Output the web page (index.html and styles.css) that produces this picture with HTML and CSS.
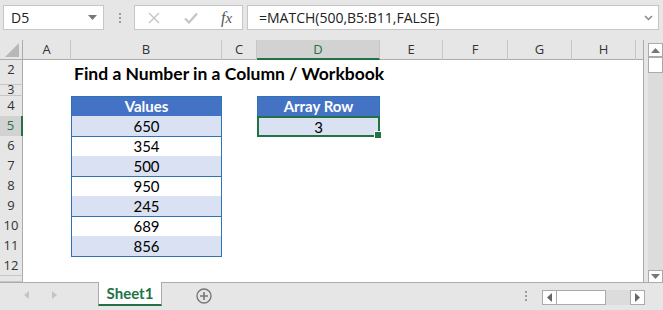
FILE: index.html
```html
<!DOCTYPE html>
<html lang="en">
<head>
    <meta charset="UTF-8">
    <meta name="viewport" content="width=device-width, initial-scale=1.0">
    <title>Find a Number in a Column / Workbook</title>
    <link rel="stylesheet" href="styles.css">
</head>
<body>
<div class="app">
    <!-- Barra de fórmulas -->
    <div class="toolbar">
        <div class="namebox">
            <span>D5</span>
            <svg class="caret" width="9" height="5" viewBox="0 0 9 5"><path d="M0 0h9L4.5 5z" fill="#777"/></svg>
        </div>
        <div class="grip"><i></i><i></i><i></i></div>
        <div class="fxbox">
            <svg width="12" height="12" viewBox="0 0 12 12"><path d="M1 1l10 10M11 1L1 11" stroke="#c4c4c4" stroke-width="1.4"/></svg>
            <svg width="14" height="12" viewBox="0 0 14 12"><path d="M1 6.5l4 4L13 1.5" stroke="#c4c4c4" stroke-width="2.2" fill="none"/></svg>
            <span class="fx"><i>f</i>x</span>
        </div>
        <div class="formula">
            <span>=MATCH(500,B5:B11,FALSE)</span>
            <svg width="9" height="6" viewBox="0 0 9 6"><path d="M1 1l3.5 3.5L8 1" stroke="#888" stroke-width="1.5" fill="none"/></svg>
        </div>
    </div>

    <div class="main">
        <div class="grid">
            <div class="row colhead">
                <div class="corner"><svg width="14" height="14" viewBox="0 0 14 14"><path d="M14 0v14H0z" fill="#b8b8b8"/></svg></div>
                <div class="ch">A</div><div class="ch">B</div><div class="ch">C</div>
                <div class="ch sel">D</div><div class="ch">E</div><div class="ch">F</div>
                <div class="ch">G</div><div class="ch">H</div><div class="ch last"></div>
            </div>
            <div class="row r-title">
                <div class="rh">2</div><div></div>
                <div class="title">Find a Number in a Column / Workbook</div>
                <div></div><div></div><div></div><div></div><div></div><div></div><div></div>
            </div>
            <div class="row r-thin">
                <div class="rh"><span>3</span></div><div></div><div></div><div></div><div></div><div></div><div></div><div></div><div></div><div></div>
            </div>
            <div class="row">
                <div class="rh">4</div><div></div>
                <div class="tc th">Values</div><div></div>
                <div class="tc th">Array Row</div>
                <div></div><div></div><div></div><div></div><div></div>
            </div>
            <div class="row">
                <div class="rh sel">5</div><div></div>
                <div class="tc alt">650</div><div></div>
                <div class="tc alt active">3</div>
                <div></div><div></div><div></div><div></div><div></div>
            </div>
            <div class="row">
                <div class="rh">6</div><div></div><div class="tc">354</div>
                <div></div><div></div><div></div><div></div><div></div><div></div><div></div>
            </div>
            <div class="row">
                <div class="rh">7</div><div></div><div class="tc alt">500</div>
                <div></div><div></div><div></div><div></div><div></div><div></div><div></div>
            </div>
            <div class="row">
                <div class="rh">8</div><div></div><div class="tc">950</div>
                <div></div><div></div><div></div><div></div><div></div><div></div><div></div>
            </div>
            <div class="row">
                <div class="rh">9</div><div></div><div class="tc alt">245</div>
                <div></div><div></div><div></div><div></div><div></div><div></div><div></div>
            </div>
            <div class="row">
                <div class="rh">10</div><div></div><div class="tc">689</div>
                <div></div><div></div><div></div><div></div><div></div><div></div><div></div>
            </div>
            <div class="row">
                <div class="rh">11</div><div></div><div class="tc alt">856</div>
                <div></div><div></div><div></div><div></div><div></div><div></div><div></div>
            </div>
            <div class="row">
                <div class="rh">12</div><div></div><div></div><div></div><div></div><div></div><div></div><div></div><div></div><div></div>
            </div>
            <div class="row r-cut">
                <div class="rh"></div><div></div><div></div><div></div><div></div><div></div><div></div><div></div><div></div><div></div>
            </div>
        </div>

        <!-- Barra de desplazamiento vertical -->
        <div class="vscroll">
            <div class="sbtn"><svg width="9" height="5" viewBox="0 0 9 5"><path d="M4.5 0L9 5H0z" fill="#777"/></svg></div>
            <div class="vthumb"></div>
            <div class="vtrack"></div>
            <div class="sbtn down"><svg width="9" height="5" viewBox="0 0 9 5"><path d="M0 0h9L4.5 5z" fill="#777"/></svg></div>
        </div>
    </div>

    <!-- Pestañas de hojas -->
    <div class="tabbar">
        <div class="navs">
            <svg width="5" height="8" viewBox="0 0 5 8"><path d="M5 0v8L0 4z" fill="#c4c4c4"/></svg>
            <svg width="5" height="8" viewBox="0 0 5 8"><path d="M0 0v8l5-4z" fill="#c4c4c4"/></svg>
        </div>
        <div class="tab">Sheet1</div>
        <svg class="add" width="16" height="16" viewBox="0 0 16 16">
            <circle cx="8" cy="8" r="7" stroke="#777" stroke-width="1.4" fill="none"/>
            <path d="M8 4v8M4 8h8" stroke="#777" stroke-width="1.6"/>
        </svg>
        <div class="spacer"></div>
        <div class="grip small"><i></i><i></i><i></i></div>
        <div class="hscroll">
            <div class="hbtn"><svg width="5" height="9" viewBox="0 0 5 9"><path d="M5 0v9L0 4.5z" fill="#666"/></svg></div>
            <div class="hthumb"></div>
            <div class="htrack"></div>
            <div class="hbtn"><svg width="5" height="9" viewBox="0 0 5 9"><path d="M0 0v9l5-4.5z" fill="#666"/></svg></div>
        </div>
    </div>
</div>
</body>
</html>
```

FILE: styles.css
```css
/* Reset */
* {
    margin: 0;
    padding: 0;
    box-sizing: border-box;
}

body {
    font-family: 'Open Sans', 'Liberation Sans', sans-serif;
    background: #e6e6e6;
    color: #222;
    overflow: hidden;
}

.app {
    width: 663px;
    height: 310px;
    display: flex;
    flex-direction: column;
}

/* Barra de fórmulas */
.toolbar {
    height: 40px;
    display: flex;
    align-items: flex-start;
    padding: 5px 3px 0 3px;
}

.namebox {
    width: 101px;
    height: 25px;
    background: #fff;
    border: 1px solid #c6c6c6;
    display: flex;
    align-items: center;
    justify-content: space-between;
    padding: 0 6px 0 7px;
    font-size: 14px;
    color: #222;
}

.grip {
    width: 2px;
    margin: 0 13px 0 15px;
    height: 25px;
    display: flex;
    flex-direction: column;
    justify-content: center;
    gap: 2px;
}

.grip i {
    display: block;
    width: 2px;
    height: 2px;
    background: #9d9d9d;
}

.fxbox {
    width: 109px;
    height: 25px;
    background: #fff;
    border: 1px solid #c6c6c6;
    display: flex;
    align-items: center;
    padding: 0 0 0 13px;
    gap: 24px;
}

.fx {
    font-family: 'Liberation Serif', serif;
    font-style: italic;
    font-size: 15px;
    color: #555;
    margin-left: -1px;
}

.fx i {
    font-size: 16px;
}

.formula {
    width: 412px;
    height: 25px;
    margin-left: 4px;
    background: #fff;
    border: 1px solid #c6c6c6;
    display: flex;
    align-items: center;
    justify-content: space-between;
    padding: 0 5px 0 11px;
    font-size: 14px;
    color: #222;
}

/* Hoja */
.main {
    height: 243px;
    display: flex;
    border-bottom: 1px solid #ababab;
}

.grid {
    width: 644px;
    background: #fff;
    border-right: 1px solid #ababab;
    overflow: hidden;
}

.row {
    display: grid;
    grid-template-columns: 23px 48px 151px 35px 123px 63px 65px 64px 64px 1fr;
    height: 20px;
}

.colhead {
    height: 20px;
    background: #e6e6e6;
    border-bottom: 1px solid #ababab;
}

.r-title { height: 25px; }
.r-thin { height: 11px; }
.r-cut { height: 6px; }

.corner {
    display: flex;
    align-items: flex-end;
    justify-content: flex-end;
    padding: 0 3px 3px 0;
    border-right: 1px solid #ababab;
}

.ch {
    border-right: 1px solid #c6c6c6;
    text-align: center;
    font-size: 13px;
    line-height: 19px;
    color: #333;
}

.ch.sel {
    background: #d2d2d2;
    border-bottom: 2px solid #217346;
    color: #217346;
    height: 20px;
}

.ch.last {
    border-right: none;
}

.rh {
    background: #e6e6e6;
    border-right: 1px solid #ababab;
    border-bottom: 1px solid #c6c6c6;
    text-align: center;
    font-size: 13px;
    line-height: 19px;
    color: #333;
    overflow: hidden;
}

.r-thin .rh {
    line-height: 10px;
    font-size: 12px;
}

.r-thin .rh span {
    display: block;
    height: 10px;
    overflow: hidden;
}

.rh.sel {
    background: #d2d2d2;
    border-right: 2px solid #217346;
    color: #217346;
}

/* Título */
.title {
    font-family: 'Lato', sans-serif;
    font-weight: bold;
    font-size: 17.5px;
    color: #000;
    white-space: nowrap;
    padding: 3px 0 0 3px;
}

/* Tablas */
.tc {
    border: 1px solid #2e75b6;
    border-top: none;
    text-align: center;
    font-family: 'Lato', sans-serif;
    font-size: 15px;
    line-height: 20px;
    color: #000;
}

.tc.th {
    background: #4472c4;
    border-top: 1px solid #2e75b6;
    color: #fff;
    font-weight: bold;
    line-height: 19px;
}

.tc.alt {
    background: #d9e1f2;
}

.tc.active {
    position: relative;
    border: 2px solid #217346;
    line-height: 18px;
    height: 21px;
}

.tc.active::after {
    content: "";
    position: absolute;
    right: -4px;
    bottom: -4px;
    width: 6px;
    height: 6px;
    background: #217346;
    border: 1px solid #fff;
}

/* Barra vertical */
.vscroll {
    width: 15px;
    margin-left: 4px;
    padding-top: 3px;
    display: flex;
    flex-direction: column;
    gap: 3px;
}

.sbtn {
    height: 14px;
    background: #fff;
    border: 1px solid #ababab;
    display: flex;
    align-items: center;
    justify-content: center;
}

.sbtn.down {
    border-bottom: none;
    height: 12px;
}

.vthumb {
    height: 16px;
    background: #fff;
    border: 1px solid #ababab;
    margin-top: -3px;
}

.vtrack {
    flex: 1;
    background: #dcdcdc;
    margin: -3px 0;
}

/* Pestañas */
.tabbar {
    height: 26px;
    display: flex;
    align-items: flex-start;
}

.navs {
    width: 98px;
    height: 24px;
    display: flex;
    align-items: center;
    padding-left: 24px;
    gap: 23px;
}

.tab {
    width: 64px;
    height: 24px;
    background: #fff;
    border-left: 1px solid #ababab;
    border-right: 1px solid #ababab;
    border-bottom: 2px solid #217346;
    margin-top: -1px;
    font-family: 'Lato', sans-serif;
    font-weight: bold;
    font-size: 15px;
    color: #217346;
    text-align: center;
    line-height: 23px;
}

.add {
    margin: 5px 0 0 34px;
}

.spacer {
    flex: 1;
}

.grip.small {
    height: 12px;
    margin: 7px 15px 0 0;
}

.hscroll {
    width: 103px;
    height: 15px;
    margin: 7px 18px 0 0;
    display: flex;
}

.hbtn {
    width: 15px;
    background: #fff;
    border: 1px solid #ababab;
    display: flex;
    align-items: center;
    justify-content: center;
}

.hthumb {
    width: 49px;
    background: #fff;
    border: 1px solid #ababab;
    border-left: none;
}

.htrack {
    width: 24px;
    background: #dcdcdc;
}
```
